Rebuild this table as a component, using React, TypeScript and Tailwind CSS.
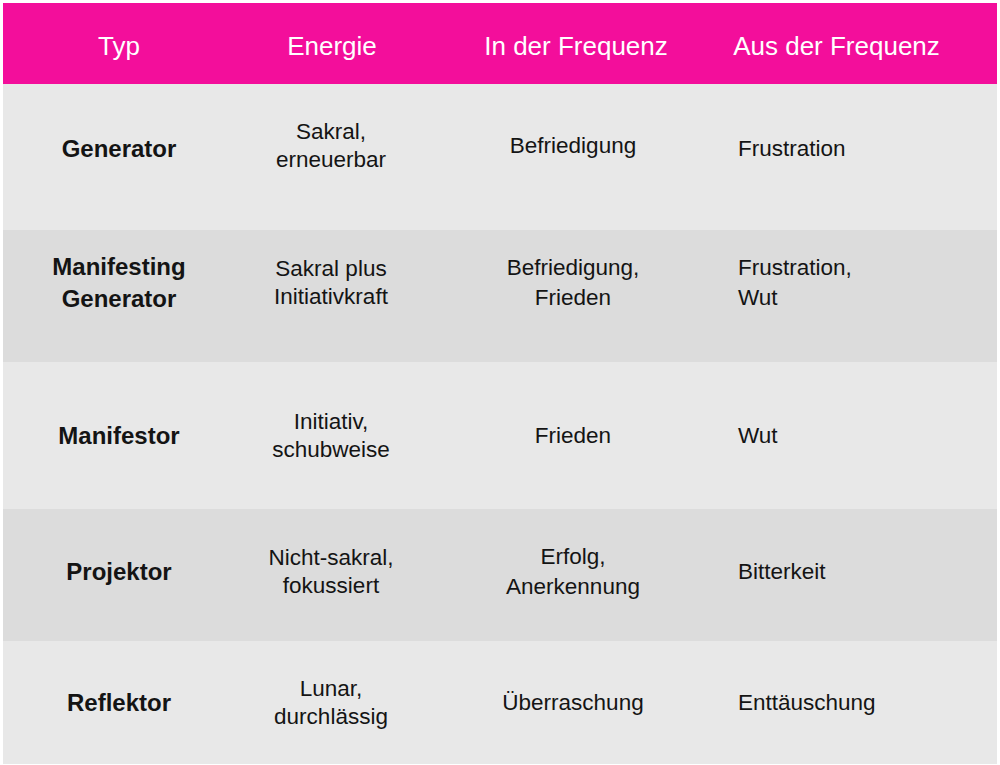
const rows = [
  {
    typ: ['Generator'],
    energie: ['Sakral,', 'erneuerbar'],
    inFreq: ['Befriedigung'],
    ausFreq: ['Frustration'],
    bg: 'bg-[#e8e8e8]',
    h: 'h-[146px] pb-[16px]',
    shift: 'pb-[6px]',
  },
  {
    typ: ['Manifesting', 'Generator'],
    energie: ['Sakral plus', 'Initiativkraft'],
    inFreq: ['Befriedigung,', 'Frieden'],
    ausFreq: ['Frustration,', 'Wut'],
    bg: 'bg-[#dcdcdc]',
    h: 'h-[132px] pb-[26px]',
    shift: '',
  },
  {
    typ: ['Manifestor'],
    energie: ['Initiativ,', 'schubweise'],
    inFreq: ['Frieden'],
    ausFreq: ['Wut'],
    bg: 'bg-[#e8e8e8]',
    h: 'h-[147px]',
    shift: '',
  },
  {
    typ: ['Projektor'],
    energie: ['Nicht-sakral,', 'fokussiert'],
    inFreq: ['Erfolg,', 'Anerkennung'],
    ausFreq: ['Bitterkeit'],
    bg: 'bg-[#dcdcdc]',
    h: 'h-[132px] pb-[6px]',
    shift: '',
  },
  {
    typ: ['Reflektor'],
    energie: ['Lunar,', 'durchlässig'],
    inFreq: ['Überraschung'],
    ausFreq: ['Enttäuschung'],
    bg: 'bg-[#e8e8e8]',
    h: 'h-[123px]',
    shift: '',
  },
]

const grid = 'grid grid-cols-[232px_194px_294px_1fr] items-center'

export default function App() {
  return (
    <div className="w-[1000px] h-[765px] bg-white p-[3px] font-['Liberation_Sans',Arial,sans-serif] text-[#141414]">
      <div className="w-[994px]">
        <div className={`${grid} h-[81px] bg-[#f30e9b] text-white text-[26px] pt-[6px]`}>
          <div className="text-center">Typ</div>
          <div className="text-center">Energie</div>
          <div className="text-center">In der Frequenz</div>
          <div className="text-center pr-[47px]">Aus der Frequenz</div>
        </div>

        {rows.map((row, i) => (
          <div key={i} className={`${grid} ${row.bg} ${row.h}`}>
            <div className="text-center font-bold text-[24px] leading-[32px]">
              {row.typ.map((t) => (
                <div key={t}>{t}</div>
              ))}
            </div>
            <div className={`text-center text-[22.5px] leading-[28px] pr-[2px] ${row.shift}`}>
              {row.energie.map((t) => (
                <div key={t}>{t}</div>
              ))}
            </div>
            <div className={`text-center text-[22.5px] leading-[30px] pr-[6px] ${row.shift}`}>
              {row.inFreq.map((t) => (
                <div key={t}>{t}</div>
              ))}
            </div>
            <div className="text-left text-[22.5px] leading-[30px] pl-[15px]">
              {row.ausFreq.map((t) => (
                <div key={t}>{t}</div>
              ))}
            </div>
          </div>
        ))}
      </div>
    </div>
  )
}
